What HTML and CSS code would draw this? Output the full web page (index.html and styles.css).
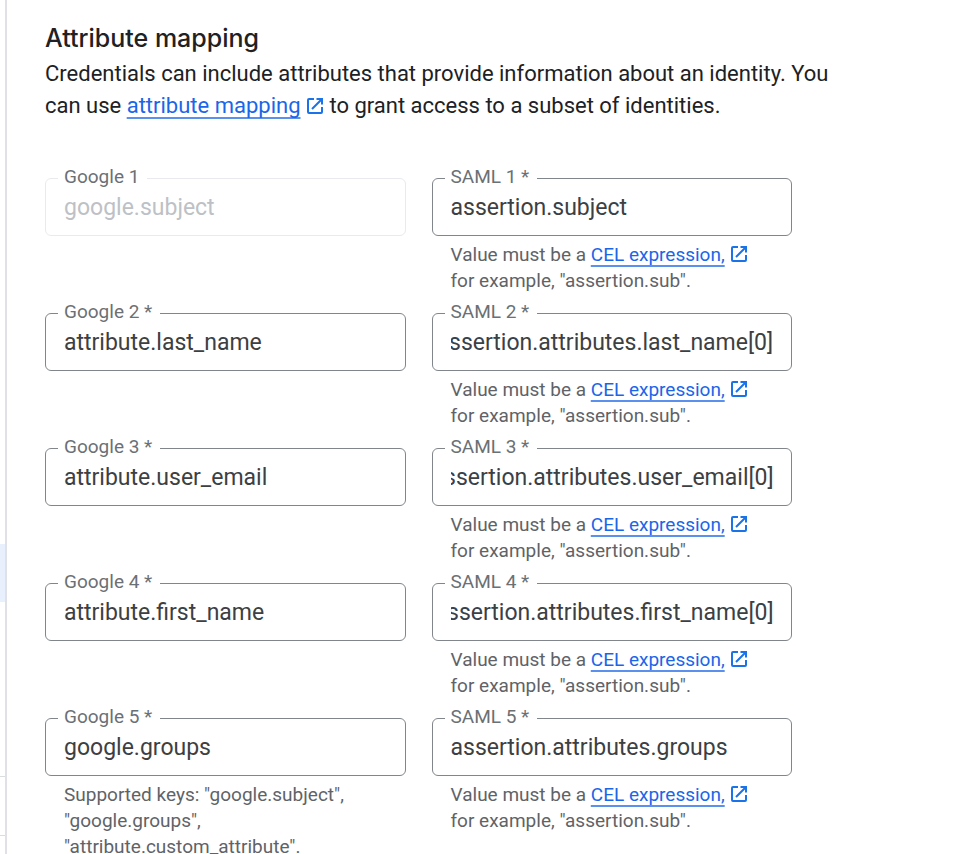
FILE: index.html
```html
<!DOCTYPE html>
<html lang="en">

<head>
  <meta charset="UTF-8">
  <meta name="viewport" content="width=device-width, initial-scale=1.0">
  <title>Attribute mapping</title>
  <link rel="stylesheet" href="styles.css">
</head>

<body>
  <svg class="sprite" aria-hidden="true">
    <symbol id="open-in-new" viewBox="0 0 18 18">
      <path d="M8 2H3Q2 2 2 3V15Q2 16 3 16H15Q16 16 16 15V10" fill="none" stroke="currentColor" stroke-width="2" />
      <path d="M10.5 2H16V7.5M16 2L6 12" fill="none" stroke="currentColor" stroke-width="2" />
    </symbol>
  </svg>

  <aside class="sidebar">
    <div class="sidebar-list">
      <div class="sidebar-item active"></div>
    </div>
    <div class="sidebar-item line"></div>
    <div class="sidebar-item line"></div>
  </aside>

  <main class="content">
    <h2 class="title">Attribute mapping</h2>
    <p class="intro">Credentials can include attributes that provide information about an identity. You can use <a href="#">attribute mapping</a> <svg class="icon"><use href="#open-in-new" /></svg> to grant access to a subset of identities.</p>

    <form class="mapping">
      <div class="field">
        <fieldset class="disabled">
          <legend><label for="google1">Google 1</label></legend>
          <input type="text" id="google1" value="google.subject" disabled>
        </fieldset>
      </div>
      <div class="field">
        <fieldset>
          <legend><label for="saml1">SAML 1 *</label></legend>
          <input type="text" id="saml1" value="assertion.subject">
        </fieldset>
        <p class="hint">Value must be a <a href="#">CEL expression,</a><svg class="icon"><use href="#open-in-new" /></svg> for example, "assertion.sub".</p>
      </div>

      <div class="field">
        <fieldset>
          <legend><label for="google2">Google 2 *</label></legend>
          <input type="text" id="google2" value="attribute.last_name">
        </fieldset>
      </div>
      <div class="field">
        <fieldset>
          <legend><label for="saml2">SAML 2 *</label></legend>
          <input type="text" id="saml2" value="assertion.attributes.last_name[0]">
        </fieldset>
        <p class="hint">Value must be a <a href="#">CEL expression,</a><svg class="icon"><use href="#open-in-new" /></svg> for example, "assertion.sub".</p>
      </div>

      <div class="field">
        <fieldset>
          <legend><label for="google3">Google 3 *</label></legend>
          <input type="text" id="google3" value="attribute.user_email">
        </fieldset>
      </div>
      <div class="field">
        <fieldset>
          <legend><label for="saml3">SAML 3 *</label></legend>
          <input type="text" id="saml3" value="assertion.attributes.user_email[0]">
        </fieldset>
        <p class="hint">Value must be a <a href="#">CEL expression,</a><svg class="icon"><use href="#open-in-new" /></svg> for example, "assertion.sub".</p>
      </div>

      <div class="field">
        <fieldset>
          <legend><label for="google4">Google 4 *</label></legend>
          <input type="text" id="google4" value="attribute.first_name">
        </fieldset>
      </div>
      <div class="field">
        <fieldset>
          <legend><label for="saml4">SAML 4 *</label></legend>
          <input type="text" id="saml4" value="assertion.attributes.first_name[0]">
        </fieldset>
        <p class="hint">Value must be a <a href="#">CEL expression,</a><svg class="icon"><use href="#open-in-new" /></svg> for example, "assertion.sub".</p>
      </div>

      <div class="field">
        <fieldset>
          <legend><label for="google5">Google 5 *</label></legend>
          <input type="text" id="google5" value="google.groups">
        </fieldset>
        <p class="hint">Supported keys: "google.subject", "google.groups", "attribute.custom_attribute".</p>
      </div>
      <div class="field">
        <fieldset>
          <legend><label for="saml5">SAML 5 *</label></legend>
          <input type="text" id="saml5" value="assertion.attributes.groups">
        </fieldset>
        <p class="hint">Value must be a <a href="#">CEL expression,</a><svg class="icon"><use href="#open-in-new" /></svg> for example, "assertion.sub".</p>
      </div>
    </form>
  </main>

  <script>
    // keep the end of long expressions in view
    document.querySelectorAll('.mapping input').forEach(function (input) {
      input.scrollLeft = input.scrollWidth;
    });
  </script>
</body>

</html>
```
FILE: styles.css
```css
* {
  box-sizing: border-box;
}

body {
  display: flex;
  height: 100vh;
  margin: 0;
  overflow: hidden;
  background: #fff;
  color: #202124;
  font-family: Roboto, "Liberation Sans", sans-serif;
}

h2,
p {
  margin: 0;
}

a {
  color: #1a66e8;
  text-decoration: underline 2px #5a90ee;
  text-decoration-skip-ink: none;
  text-underline-offset: 4px;
}

.sprite {
  display: none;
}

.icon {
  width: 18px;
  height: 18px;
  color: #1a73e8;
  vertical-align: -2px;
}

/* edge of the navigation */
.sidebar {
  flex: none;
  width: 7px;
  border-right: 2px solid #dfe0e8;
}

.sidebar-list {
  height: 776px;
  padding-top: 544px;
}

.sidebar-item {
  height: 59px;
}

.sidebar-item.active {
  height: 58px;
  background: #e8f0fe;
}

.sidebar-item.line {
  border-top: 1px solid #dadce0;
}

.content {
  flex: 1;
  padding: 21px 38px 0;
}

.title {
  margin-bottom: 3px;
  font-family: Inter, Roboto, sans-serif;
  font-size: 25px;
  font-weight: 500;
  line-height: 34px;
}

.intro {
  max-width: 820px;
  font-size: 22px;
  line-height: 32px;
}

.mapping {
  display: grid;
  grid-template-columns: 1fr 1fr;
  gap: 7px 26px;
  max-width: 747px;
  margin-top: 44px;
}

fieldset {
  min-width: 0;
  margin: 0;
  padding: 0 18px 12px;
  border: 1px solid #80868b;
  border-radius: 6px;
}

legend {
  margin-left: -6px;
  padding: 0 8px 4px 6px;
  color: #6b7075;
  font-size: 19px;
  line-height: 21px;
}

input {
  display: block;
  width: 100%;
  height: 32px;
  padding: 0;
  border: 0;
  outline: 0;
  background: none;
  color: #3c4043;
  font-family: inherit;
  font-size: 23px;
}

.disabled {
  border-color: #e8eaed;
}

.disabled input {
  color: #bdc1c6;
}

.hint {
  margin-top: 6px;
  padding: 0 19px;
  color: #5f6368;
  font-size: 19px;
  line-height: 26px;
}

.hint .icon {
  margin-left: 5px;
}
```
